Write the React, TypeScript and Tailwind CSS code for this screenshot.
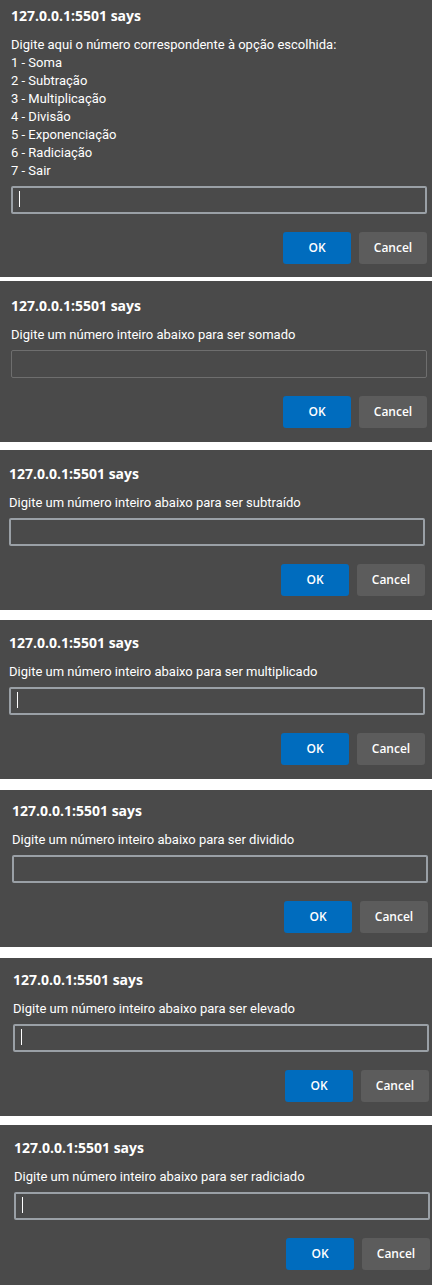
import { useId } from "react";

type Prompt = {
  message: string;
  frame: string;
  field?: string;
  caret?: boolean;
};

const focusedField = "border-2 border-[#9aa0a6]";
const idleField = "border border-[#6e6e6e]";

const prompts: Prompt[] = [
  {
    message: [
      "Digite aqui o número correspondente à opção escolhida:",
      "1 - Soma",
      "2 - Subtração",
      "3 - Multiplicação",
      "4 - Divisão",
      "5 - Exponenciação",
      "6 - Radiciação",
      "7 - Sair",
    ].join("\n"),
    frame: "pt-1.5 pb-[13px] pl-[11px] pr-[5px]",
    caret: true,
  },
  {
    message: "Digite um número inteiro abaixo para ser somado",
    frame: "mt-1 pt-[15px] pb-3.5 pl-[11px] pr-[5px]",
    field: idleField,
  },
  {
    message: "Digite um número inteiro abaixo para ser subtraído",
    frame: "mt-2 pt-3.5 pb-3.5 pl-[9px] pr-[7px]",
  },
  {
    message: "Digite um número inteiro abaixo para ser multiplicado",
    frame: "mt-2.5 pt-[13px] pb-3.5 pl-[9px] pr-[7px]",
    caret: true,
  },
  {
    message: "Digite um número inteiro abaixo para ser dividido",
    frame: "mt-[11px] pt-[11px] pb-3.5 pl-3 pr-1",
  },
  {
    message: "Digite um número inteiro abaixo para ser elevado",
    frame: "mt-[11px] pt-3 pb-3.5 pl-[13px] pr-[3px]",
    caret: true,
  },
  {
    message: "Digite um número inteiro abaixo para ser radiciado",
    frame: "mt-[9px] grow pt-[13px] pb-3.5 pl-3.5 pr-0.5",
    caret: true,
  },
];

function PromptDialog({ message, frame, field = focusedField, caret }: Prompt) {
  const id = useId();
  return (
    <form
      className={`bg-[#4a4a4a] text-white ${frame}`}
      onSubmit={(event) => event.preventDefault()}
    >
      <h2 className="text-sm leading-5 font-bold">127.0.0.1:5501 says</h2>
      <label
        htmlFor={id}
        className="mt-2.5 block font-[Roboto,sans-serif] text-[13px] leading-[18px] whitespace-pre-line"
      >
        {message}
      </label>
      <div className="relative mt-1.5">
        <input
          id={id}
          type="text"
          className={`block h-7 w-full rounded-[2px] bg-transparent px-1.5 text-[13px] outline-none ${field}`}
        />
        {caret && (
          <span
            aria-hidden="true"
            className="pointer-events-none absolute top-[5px] left-2 h-4 w-px bg-white"
          />
        )}
      </div>
      <div className="mt-[18px] flex justify-end gap-2 text-xs font-semibold">
        <button type="submit" className="h-8 w-17 rounded-[3px] bg-[#006cbe]">
          OK
        </button>
        <button type="button" className="h-8 w-17 rounded-[3px] bg-[#5c5c5c]">
          Cancel
        </button>
      </div>
    </form>
  );
}

export default function App() {
  return (
    <main className="flex min-h-screen flex-col bg-white font-['Open_Sans','Noto_Sans',sans-serif]">
      {prompts.map((prompt) => (
        <PromptDialog key={prompt.message} {...prompt} />
      ))}
    </main>
  );
}
